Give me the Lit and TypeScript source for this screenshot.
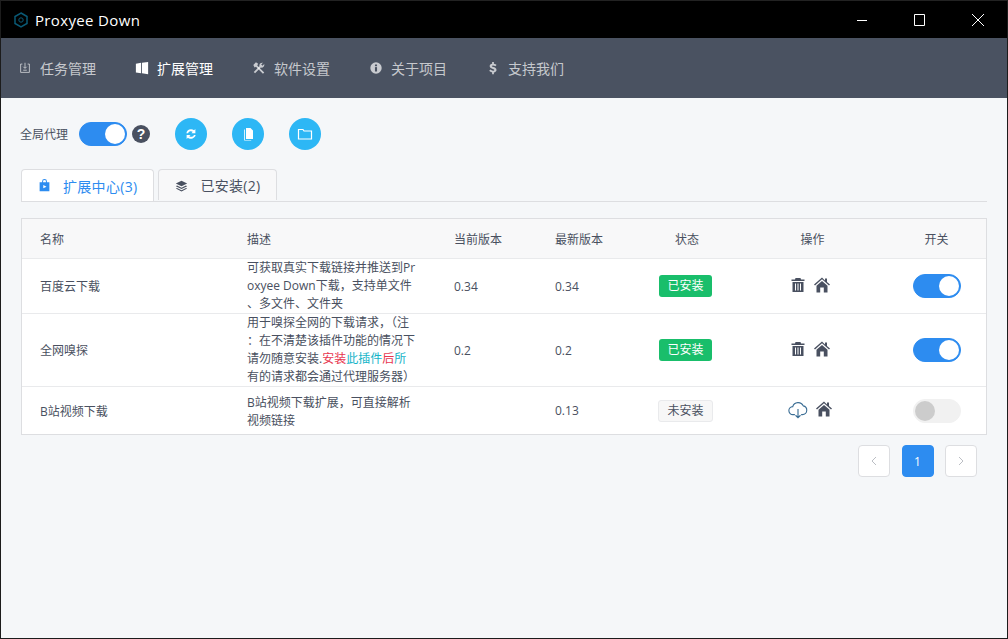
import { LitElement, html, css, svg } from "lit";
import { customElement } from "lit/decorators.js";

const icon = (size: number, body: unknown, box = "0 0 16 16") => html`<svg width=${size} height=${size} viewBox=${box} fill="currentColor">${body}</svg>`;

const navIcons = [
  svg`<path fill="none" stroke="currentColor" d="M5 3.500H3v9.500h10V3.500h-2M8 2v6M6 6.500l2 2 2-2M6 10.500h4"/>`,
  svg`<path d="M1 3l6-1v12l-6-1zM8 2l7-1v14l-7-1z"/>`,
  svg`<path d="M1.500 4.500L4.500 1.500 7 3 6 5l8 8-1.500 1.500-8-8-1.500 1z"/><path d="M2 12.500L8.500 6c-.6-2.500 1.200-4.500 4-4L10.500 4l1.500 1.500 2-2c.5 2.800-1.500 4.600-4 4L3.500 14z"/>`,
  svg`<circle cx="8" cy="8" r="6.500"/><rect x="6.800" y="7" width="2.400" height="5" fill="#4a5261"/><rect x="6.800" y="4" width="2.400" height="2" fill="#4a5261"/>`,
  svg`<path d="M7 1h2v2c1.500.2 2.500.8 3 1.500l-1.300 1.500C10 5.300 9 5 8 5c-.9 0-1.300.3-1.300.8 0 1.400 5.300.9 5.300 4.400 0 1.500-1.200 2.500-3 2.800V15H7v-2c-1.500-.2-2.700-.9-3.300-1.800L5 9.800c.8.800 1.900 1.200 3 1.200 1 0 1.500-.3 1.500-.8 0-1.400-5.300-.9-5.300-4.400C4.200 4.300 5.300 3.300 7 3z"/>`,
];
const nav = ["任务管理", "扩展管理", "软件设置", "关于项目", "支持我们"];

const trash = svg`<path d="M5.500 1h5l.5 1.500h3.500V4h-13V2.500H5zM2.500 5h11v10h-11zM5 6.500v7h1v-7zm2.500 0v7h1v-7zm2.500 0v7h1v-7z" fill-rule="evenodd"/>`;
const home = svg`<path d="M8 .5L0 7.500l1 1 7-6.200 7 6.200 1-1-3-2.600V1.500h-2v2.100zM2.500 8.800L8 4l5.500 4.800V15.500H9.800v-5H6.200v5H2.500z"/>`;
const cloud = svg`<path fill="none" stroke="currentColor" stroke-width=".9" d="M5.500 12.500H4A3.200 3.200 0 0 1 3.800 6.100 4.500 4.500 0 0 1 12.200 5.500 3.500 3.500 0 0 1 15 9c0 2-1.500 3.500-3.500 3.500H10.500M8 8v7M6 13l2 2 2-2"/>`;

const rows = [
  { name: "百度云下载", desc: html`可获取真实下载链接并推送到Proxyee Down下载，支持单文件、多文件、文件夹`, cur: "0.34", latest: "0.34", ok: true, on: true },
  { name: "全网嗅探", desc: html`用于嗅探全网的下载请求，（注：在不清楚该插件功能的情况下请勿随意安装.<span class="red">安装</span><span class="cyan">此插件</span><span class="red">后</span><span class="cyan">所</span>有的请求都会通过代理服务器）`, cur: "0.2", latest: "0.2", ok: true, on: true },
  { name: "B站视频下载", desc: html`B站视频下载扩展，可直接解析视频链接`, cur: "", latest: "0.13", ok: false, on: false },
];

@customElement("app-root")
export class AppRoot extends LitElement {
  static styles = css`
    :host {
      display: block;
      width: 1008px;
      height: 639px;
      box-sizing: border-box;
      border: 1px solid #1c1c1c;
      border-top-color: #222;
      background: #f5f7f9;
      color: #495060;
      font-family: "Open Sans", "Noto Sans CJK SC", sans-serif;
      font-size: 12px;
      overflow: hidden;
    }
    .titlebar {
      height: 37px;
      background: #000;
      display: flex;
      align-items: center;
      color: #fff;
      font-size: 15px;
      padding-left: 12px;
    }
    .logo { color: #0a5a76; margin-right: 6px; display: flex; }
    .title { flex: 1; letter-spacing: 0.35px; }
    .win { width: 58px; display: flex; justify-content: center; color: #fff; }
    .nav {
      height: 60px;
      background: #4a5261;
      display: flex;
      align-items: center;
      padding-left: 17px;
      font-size: 14px;
      color: rgba(255, 255, 255, 0.7);
    }
    .nav-item { display: flex; align-items: center; gap: 8px; margin-right: 39px; }
    .nav-item svg { flex: none; }
    .nav-item.active { color: #fff; }
    .content { padding: 20px 20px 0; }
    .toolbar { display: flex; align-items: center; height: 32px; }
    .toolbar .label { margin: 0 11px 0 -1px; }
    .switch {
      display: block;
      width: 48px;
      height: 24px;
      box-sizing: border-box;
      border-radius: 12px;
      background: #2d8cf0;
      border: 1px solid #2d8cf0;
      position: relative;
      flex: none;
    }
    .switch::after {
      content: "";
      position: absolute;
      top: 1px;
      left: 25px;
      width: 20px;
      height: 20px;
      border-radius: 50%;
      background: #fff;
    }
    .switch.off { background: #f1f1f1; border-color: #f1f1f1; }
    .switch.off::after { left: 1px; background: #ccc; }
    .help {
      width: 18px;
      height: 18px;
      margin-left: 5px;
      border-radius: 50%;
      background: #495060;
      color: #fff;
      font: bold 14px/18px "Liberation Sans", sans-serif;
      text-align: center;
    }
    .round {
      width: 32px;
      height: 32px;
      border-radius: 50%;
      background: #2db7f5;
      color: #fff;
      display: flex;
      align-items: center;
      justify-content: center;
      margin-left: 25px;
    }
    .tabs {
      display: flex;
      margin-top: 19px;
      height: 32px;
      border-bottom: 1px solid #dddee1;
      font-size: 14px;
    }
    .tab {
      display: flex;
      align-items: center;
      height: 31px;
      box-sizing: border-box;
      padding: 0 16px;
      margin-right: 4px;
      border: 1px solid #dddee1;
      border-bottom: none;
      border-radius: 4px 4px 0 0;
      background: #f8f8f9;
      gap: 12px;
      letter-spacing: 0.3px;
    }
    .tab.active { height: 32px; background: #fff; color: #2d8cf0; }
    .table {
      margin-top: 16px;
      width: 966px;
      box-sizing: border-box;
      border: 1px solid #dddee1;
      background: #fff;
    }
    .row {
      display: grid;
      grid-template-columns: 207px 207px 101px 101px 95px 154px 99px;
      align-items: center;
      border-top: 1px solid #e9eaec;
    }
    .row.head { border-top: none; background: #f8f8f9; height: 40px; box-sizing: border-box; border-bottom: 1px solid #e9eaec; }
    .row.head + .row { border-top: none; }
    .cell { padding-left: 18px; min-width: 0; }
    .center { padding: 0; display: flex; justify-content: center; align-items: center; }
    .head .status { padding-left: 3px; }
    .head .action { padding-left: 5px; }
    .desc { width: 170px; line-height: 18px; word-break: break-all; line-break: anywhere; }
    .short { min-height: 47px; }
    .short .desc { padding-top: 2px; }
    .red { color: #e8364f; }
    .cyan { color: #14b4c8; }
    .tag {
      height: 22px;
      line-height: 22px;
      padding: 0 8px;
      border-radius: 3px;
      background: #19be6b;
      color: #fff;
    }
    .tag.off {
      box-sizing: border-box;
      background: #f7f7f7;
      border: 1px solid #e9eaec;
      color: #495060;
      line-height: 20px;
    }
    .ops { gap: 8px; color: #495060; margin-top: -3px; }
    .cloud { color: #3a6d94; display: flex; }
    .pager { display: flex; justify-content: flex-end; gap: 11.5px; margin: 10px 10px 0 0; }
    .page {
      width: 32px;
      height: 32px;
      box-sizing: border-box;
      border: 1px solid #dddee1;
      border-radius: 4px;
      background: #fff;
      color: #bbbec4;
      display: flex;
      align-items: center;
      justify-content: center;
    }
    .page.current { background: #2d8cf0; border-color: #2d8cf0; color: #fff; }
  `;

  render() {
    return html`
      <div class="titlebar">
        <span class="logo">${icon(16, svg`<path fill="none" stroke="currentColor" stroke-width="1.500" d="M8 1l6 3.500v7L8 15l-6-3.500v-7z"/><circle cx="8" cy="8" r="2.200" fill="none" stroke="currentColor"/>`)}</span>
        <span class="title">Proxyee Down</span>
        <span class="win">${icon(12, svg`<path d="M1 6h10v1H1z"/>`, "0 0 12 12")}</span>
        <span class="win">${icon(12, svg`<path fill="none" stroke="currentColor" d="M.5.5h10v11H.5z"/>`, "0 0 12 12")}</span>
        <span class="win">${icon(14, svg`<path fill="none" stroke="currentColor" d="M1 1l12 12M13 1L1 13"/>`, "0 0 14 14")}</span>
      </div>
      <div class="nav">
        ${nav.map((n, i) => html`<div class="nav-item ${i === 1 ? "active" : ""}">${icon(14, navIcons[i])}<span>${n}</span></div>`)}
      </div>
      <div class="content">
        <div class="toolbar">
          <span class="label">全局代理</span>
          <span class="switch"></span>
          <span class="help">?</span>
          <span class="round">${icon(14, svg`<path d="M8 2.500a5.500 5.500 0 0 1 3.500 1.300L13 2.300V7H8.500l1.500-1.500A3.500 3.500 0 0 0 4.600 7H2.700A5.500 5.500 0 0 1 8 2.500zM3 9h4.500L6 10.500A3.500 3.500 0 0 0 11.400 9h1.900a5.500 5.500 0 0 1-8.800 3.200L3 13.700z"/>`)}</span>
          <span class="round">${icon(16, svg`<path d="M6 2h4.500L13 4.500V13H6z M4.200 3.500v11h7V14H5V3.500z"/>`)}</span>
          <span class="round">${icon(16, svg`<path fill="none" stroke="currentColor" stroke-width="1.200" d="M1.500 13V3.500h4.500l1 1.500h7.500v8z"/>`)}</span>
        </div>
        <div class="tabs">
          <div class="tab active">${icon(13, svg`<path d="M5 4V3a3 3 0 0 1 6 0v1h3v11H2V4zm1.200 0h3.600V3a1.800 1.800 0 0 0-3.600 0zM6.500 7.500v4l4-2z" fill-rule="evenodd"/>`)}<span>扩展中心(3)</span></div>
          <div class="tab">${icon(13, svg`<path d="M8 2l7 3.500L8 9 1 5.500zM2.500 8L8 10.700 13.500 8l1.500.8L8 12.300 1 8.800zM2.500 11L8 13.700l5.500-2.700 1.500.8L8 15.300 1 11.800z"/>`)}<span>已安装(2)</span></div>
        </div>
        <div class="table">
          <div class="row head">
            <div class="cell">名称</div><div class="cell">描述</div><div class="cell">当前版本</div><div class="cell">最新版本</div>
            <div class="center status">状态</div><div class="center action">操作</div><div class="center">开关</div>
          </div>
          ${rows.map((r) => html`
            <div class="row ${r.ok ? "" : "short"}">
              <div class="cell">${r.name}</div>
              <div class="cell"><div class="desc">${r.desc}</div></div>
              <div class="cell">${r.cur}</div>
              <div class="cell">${r.latest}</div>
              <div class="center"><span class="tag ${r.ok ? "" : "off"}">${r.ok ? "已安装" : "未安装"}</span></div>
              <div class="center ops">
                ${r.ok ? icon(16, trash) : html`<span class="cloud">${icon(20, cloud)}</span>`}
                ${icon(16, home)}
              </div>
              <div class="center"><span class="switch ${r.on ? "" : "off"}"></span></div>
            </div>`)}
        </div>
        <div class="pager">
          <div class="page">${icon(12, svg`<path fill="none" stroke="currentColor" d="M8 2L4 6l4 4" />`, "0 0 12 12")}</div>
          <div class="page current">1</div>
          <div class="page">${icon(12, svg`<path fill="none" stroke="currentColor" d="M4 2l4 4-4 4" />`, "0 0 12 12")}</div>
        </div>
      </div>
    `;
  }
}
